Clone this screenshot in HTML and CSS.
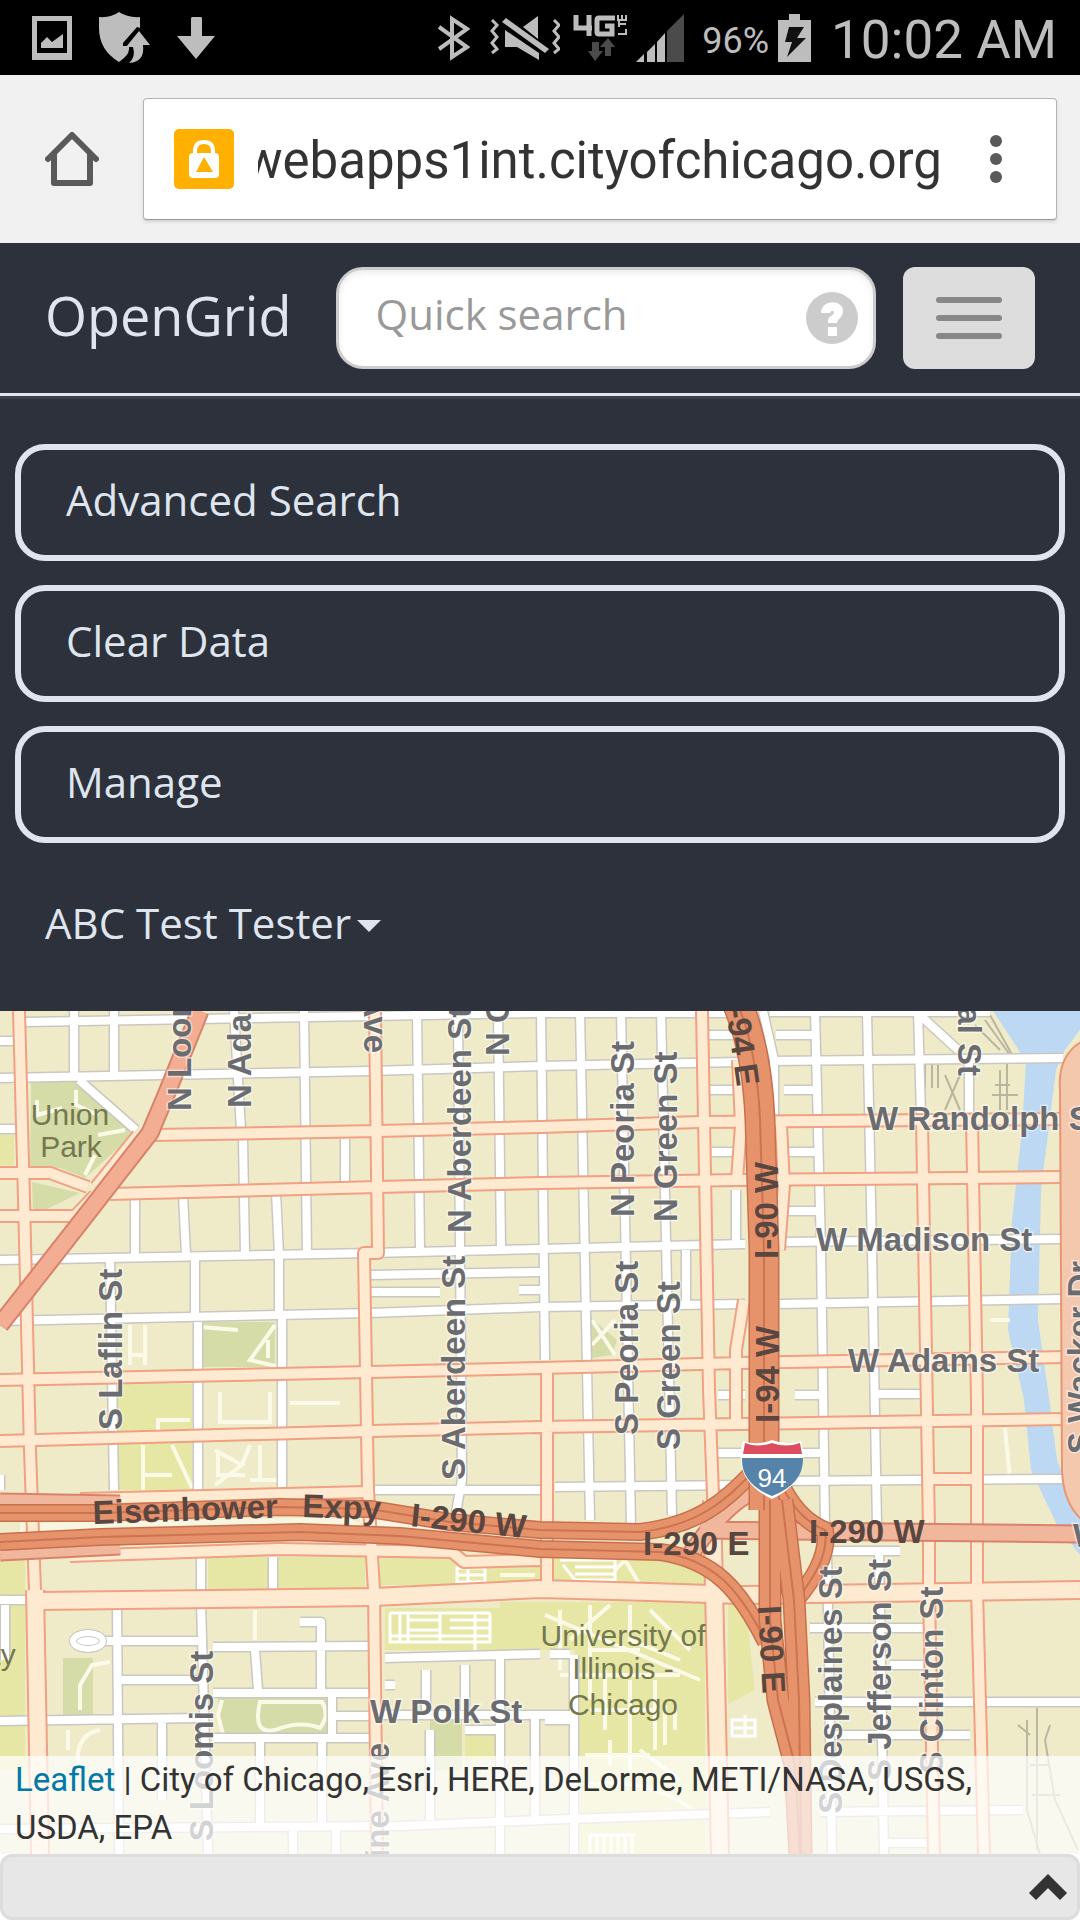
FILE: index.html
```html
<!DOCTYPE html>
<html lang="en">
<head>
<meta charset="utf-8">
<meta name="viewport" content="width=device-width, initial-scale=1">
<title>OpenGrid</title>
<link rel="stylesheet" href="styles.css">
</head>
<body>
<div class="status-bar">
  <svg class="status-icon" width="40" height="44" viewBox="0 0 40 44"><path fill-rule="evenodd" d="M0 0H40V44H0ZM5 5V37H35V5Z"/><path d="M9 32V27L15 21L20 26L31 18V32Z"/></svg>
  <svg class="status-icon shield" width="51" height="52" viewBox="0 0 51 52"><path d="M0 5Q12 6 20 0Q29 6 41 5V16L38 15L24 31V34H30Q31 41 25 46L20 50Q0 38 0 16Z"/><path d="M40 19L51 33H44Q46 50 30 51Q37 45 34 35H27Z"/></svg>
  <svg class="status-icon arrow" width="38" height="42" viewBox="0 0 38 42"><path d="M15 0H24Q25 0 25 2V19H38L19 42L0 19H14V2Q14 0 15 0Z"/></svg>
  <div class="status-right">
    <svg class="status-icon" width="32" height="48" viewBox="0 0 32 48"><path fill="none" stroke="currentColor" stroke-width="4" d="M1 13L29 33L14 43V5L29 15L1 35"/></svg>
    <svg class="status-icon mute" width="70" height="46" viewBox="0 0 70 46"><path d="M15 15V32H27L49 45V38ZM33 12L48 1V24ZM12 7L16 3L59 34L55 38Z"/><path fill="none" stroke="currentColor" stroke-width="3" d="M2 5L7 10L2 16L7 22L2 28L7 34L2 38M64 5L69 10L64 16L69 22L64 28L69 34L64 38"/></svg>
    <svg class="status-icon" width="54" height="48" viewBox="0 0 54 48"><path fill="none" stroke="currentColor" stroke-width="5" d="M3 1V14H19M16 1V22M42 4H26Q24 4 24 6V18Q24 20 26 20H39V12H32"/><path fill="none" stroke="currentColor" stroke-width="2" d="M45 20H53V15M45 10H53M46 7V13M45 1V6H53V1M49 1V6"/><path fill="#4b4b4b" d="M19 28H26V37H30L22 47L15 37H19ZM32 42H38V33H42L35 24L27 33H32Z"/></svg>
    <svg class="status-icon signal" width="48" height="48" viewBox="0 0 48 48"><path d="M0 48L8 40V48ZM11 38L19 30V48H11ZM21 28L29 19V48H21Z"/><path fill="#4b4b4b" d="M31 17L48 0V48H31Z"/></svg>
    <span class="battery-text">96%</span>
    <svg class="status-icon battery" width="33" height="48" viewBox="0 0 33 48"><path d="M11 0H22V6H33V48H0V6H11Z"/><path fill="#111" d="M11 13H26L19 24H28L9 43L14 28H7Z"/></svg>
    <span class="clock">10:02 AM</span>
  </div>
</div>

<div class="browser-bar">
  <button class="plain home" aria-label="Home"><svg width="54" height="54" viewBox="0 0 54 54" fill="none" stroke="#5a5a5a" stroke-width="6" stroke-linecap="round" stroke-linejoin="round"><path d="M3 27L27 3L51 27M9 22V51H45V22"/></svg></button>
  <div class="omnibox">
    <svg class="lock" width="60" height="60" viewBox="0 0 60 60"><rect width="60" height="60" rx="5" fill="#ffb000"/><path fill="none" stroke="#fff" stroke-width="4" d="M21 26V22Q21 13 30 13T39 22V26"/><rect x="15" y="24" width="30" height="25" rx="4" fill="#fff"/><path fill="#ffb000" d="M30 28L39 43H22Z"/></svg>
    <div class="url-clip"><input class="url" type="text" aria-label="Address" value="webapps1int.cityofchicago.org"></div>
    <button class="plain" aria-label="Browser menu"><svg width="12" height="48" viewBox="0 0 12 48" fill="#5a5a5a"><circle cx="6" cy="6" r="6"/><circle cx="6" cy="24" r="6"/><circle cx="6" cy="42" r="6"/></svg></button>
  </div>
</div>

<header class="navbar">
  <div class="nav-head">
    <a class="brand" href="#">OpenGrid</a>
    <div class="search">
      <input type="text" placeholder="Quick search" aria-label="Quick search">
      <button class="plain" aria-label="Help"><svg width="52" height="52" viewBox="0 0 52 52"><circle cx="26" cy="26" r="26" fill="#ccc"/><path fill="#fff" d="M15 21C15 7 37 7 37 19C37 26 31 27 31 31H22C21 24 27 24 28 21C28 18 25 18 24 21ZM22 35H31V44H22Z"/></svg></button>
    </div>
    <button class="toggle" aria-label="Toggle navigation"><span class="bar"></span><span class="bar"></span><span class="bar"></span></button>
  </div>
  <nav class="nav-menu">
    <button class="menu-button">Advanced Search</button>
    <button class="menu-button">Clear Data</button>
    <button class="menu-button">Manage</button>
    <a class="user" href="#">ABC Test Tester<span class="caret"></span></a>
  </nav>
</header>

<main class="map">
<svg class="map-canvas" viewBox="0 1011 1080 843" preserveAspectRatio="xMidYMid slice" role="img" aria-label="Street map of the Near West Side, Chicago">
  <defs>
    <g id="streets">
      <path d="M26 1022L370 1016L540 1013L730 1013M770 1012H990M0 1078L370 1071L540 1066L740 1062M770 1061L1063 1058M0 1041H14M0 1129H16M79 1080L136 1130M0 1260L370 1253L540 1249L745 1244M781 1242L1063 1239M0 1321L370 1313L540 1307L745 1304M780 1304L1063 1299M371 1275L540 1272M371 1292H440M519 1290H540M375 1490H540M555 1487L745 1485M780 1481L1063 1479"/>
      <path d="M74 1011V1078M114 1011V1078M234 1011L241 1130M243 1139L245 1255M304 1011L307 1255M345 1139V1184M417 1011L420 1250M458 1011L462 1480L456 1512M498 1011L501 1248M541 1011L545 1360M135 1196V1255M183 1195L186 1255M276 1192L279 1255M195 1258V1315M279 1255V1315M110 1257L114 1490M198 1322V1490M282 1313V1488M201 1557V1594M273 1557V1594M0 1475V1490"/>
      <path d="M580 1011L590 1520M621 1011L631 1525M661 1011L672 1515M686 1250V1305M736 1190V1245M763 1011L774 1060V1115M815 1011L821 1250L825 1525M867 1011L872 1250L877 1525M918 1011L921 1115M969 1060V1112M922 1017L958 1050M709 1035H735M776 1035H815M709 1090H735M784 1090H815M712 1152H740M787 1152H818M787 1211H818M718 1395H745M795 1395H824M877 1394H920M718 1453H745M785 1453H824"/>
      <path d="M827 1552L832 1854M879 1552L884 1854M832 1551H900M810 1628H925M890 1665H925M815 1702H1080M835 1735H970M540 1820L770 1812M820 1812L1023 1810M885 1843H930M201 1602L208 1854M117 1610L119 1854M0 1600H25M5 1605V1660M74 1641H200M119 1680H200M213 1647L372 1646M255 1650L258 1690M300 1622H321V1690M213 1693H372M332 1693V1735M0 1721L200 1718M162 1720V1800M213 1738H372M335 1716H372M260 1740V1825M322 1738V1825M385 1658L540 1654M385 1685H395M426 1670V1710M465 1665V1710M500 1658V1854M380 1715H570M465 1730H500M0 1829L400 1826L540 1820M430 1730V1820M535 1715V1820M574 1655V1854M550 1654H570M545 1720H574M293 1830V1854M336 1830V1854"/>
    </g>
    <g id="avenues">
      <path d="M19 1011L24 1200L30 1450L35 1590L39 1854M375 1011L378 1253H364L368 1490L374 1590L377 1854M155 1135L378 1131L540 1127L700 1122L1063 1119M110 1194L378 1187L540 1183L740 1180L1063 1177M0 1173H50L88 1187M0 1216H75L95 1195M138 1135L96 1187"/>
      <path d="M0 1380L370 1372L540 1368L740 1363L1065 1357M0 1441L370 1431L540 1427L740 1424L1065 1419M702 1011L709 1390L717 1600L719 1854M547 1365V1594M738 1060L741 1125L737 1180M781 1125L784 1185L779 1250M744 1300L736 1350V1424M922 1120L929 1530V1592L934 1854M972 1120L977 1400V1590L984 1854M926 1479H972M80 1499L366 1492M70 1556L280 1549L452 1552L464 1562L540 1560"/>
    </g>
    <path id="boulevard" d="M39 1601L374 1597L540 1589L650 1592L740 1595L1080 1590"/>
    <path id="ashland" d="M35 1590L40 1854M712 1500L720 1854"/>
    <path id="ogden" d="M200 1011L166 1095L150 1133L90 1210L0 1325"/>
    <path id="wacker" d="M1095 1050Q1070 1058 1073 1090L1075 1470Q1076 1500 1095 1514"/>
    <path id="congress" d="M0 1502L120 1504M0 1552L120 1546M700 1530L1080 1534M690 1555Q735 1490 765 1490"/>
    <g id="interstates">
      <path d="M0 1513L100 1513L280 1507L370 1509L450 1522L540 1530L640 1532C700 1525 725 1500 750 1475"/>
      <path d="M0 1542L100 1537L300 1532L400 1536L540 1549L660 1552C715 1560 740 1590 766 1642M784 1490Q800 1520 825 1530Q830 1560 796 1600"/>
    </g>
    <path id="ryan" d="M770 1500V1620L778 1700L795 1765L800 1854M782 1500L794 1600L799 1700L801 1854"/>
    <path id="kennedy" d="M738 1005Q757 1050 760 1120L764 1250V1510"/>
  </defs>

  <rect y="1000" width="1080" height="860" fill="#efebc9"/>
  <path fill="#d5dca8" d="M31 1082L75 1080L135 1133L85 1178L60 1168H30ZM32 1182L80 1193L45 1210H33ZM200 1322H275V1367H200ZM590 1317L617 1340L612 1355L592 1358ZM63 1658H93V1716H63ZM218 1698H328V1738H222ZM430 1715H462V1770H430Z"/>
  <path fill="#e6e7a4" d="M0 1135H14V1165H0ZM118 1384H192V1490H118ZM208 1557H365V1590H208ZM380 1557H700L735 1585H380ZM0 1560H25V1770H0ZM385 1608H540V1650H385ZM500 1602H705V1710H575V1650H500ZM580 1700H705V1854H580ZM728 1602H745L755 1690L728 1704ZM465 1732H495V1760H465Z"/>
  <path fill="#f8f5e1" d="M300 1500L380 1530L540 1538V1530L450 1518ZM20 1523L360 1517V1525L20 1532Z"/>
  <path fill="#bcd8f2" d="M993 1011L1020 1052L1026 1062L1022 1130L1012 1220L1008 1330L1024 1400L1031 1470L1057 1525L1080 1555V1520L1057 1460L1048 1390L1038 1320L1041 1190L1056 1070L1065 1050L1080 1030V1011Z"/>
  <g class="paths">
    <path d="M37 1100V1115L62 1108M76 1090V1105L98 1115M98 1135L125 1130M95 1155L85 1175M130 1325V1365M145 1325V1365M130 1355H145M200 1327L238 1330M275 1325L250 1360L280 1367M268 1340V1358M158 1430V1420H190M143 1445V1490M143 1475H172M172 1445L192 1488M220 1392V1422H270V1392M215 1450L242 1465L215 1485M218 1450V1475H245M242 1465L250 1445M260 1445V1482M250 1480H278M290 1403H340"/>
    <path d="M592 1320L615 1355M615 1320L592 1345M255 1610V1640M80 1710V1685L92 1665L110 1662M260 1702Q252 1735 275 1730Q300 1720 320 1728Q330 1715 322 1702ZM68 1730V1750M100 1730Q75 1735 78 1765L95 1790M222 1700L218 1715L224 1738M500 1575H535M615 1570L625 1560L640 1585M545 1615L700 1680M560 1610V1670M590 1605V1700M610 1605L570 1640M630 1605V1640L680 1660M650 1610L690 1650M590 1650H640M560 1675H680M605 1670V1730M630 1680V1770M655 1680V1750M590 1710H660M585 1755H650M610 1740V1765M640 1750L680 1780M585 1785Q650 1775 700 1815M665 1705V1745M675 1705V1730M1005 1428L1010 1480M990 1320H1010"/>
  </g>
  <g class="lots">
    <path d="M390 1613V1642H490V1613M390 1613H490M400 1613V1642M408 1613V1642M408 1620H440V1630H408M440 1613V1642M450 1620H490M450 1628H490M390 1636H490M475 1613V1655M457 1568H485V1582H457ZM457 1575H485M468 1568V1582M560 1560H615V1580H575L563 1565M575 1567H615M575 1574H615M732 1720H755V1736H732ZM745 1715V1736M732 1728H755M590 1835V1853M597 1835V1853M604 1835V1853M611 1835V1853M618 1835V1853M625 1835V1853M632 1835V1853M590 1835H635"/>
    <path class="rail" d="M925 1060V1088M932 1060V1088M938 1065V1088M945 1075L960 1110M960 1075L945 1110M995 1085H1010M1000 1070V1110M1007 1060V1110M992 1095H1018M985 1020L1010 1055M975 1025L1000 1050M990 1015L1015 1060M1037 1708V1850M1027 1720V1810L1040 1854M1045 1740L1055 1800L1078 1850M1030 1765H1050M1032 1795H1060M1018 1725L1030 1735M1050 1725L1045 1740"/>
  </g>

  <use href="#streets" class="street-edge"/><use href="#streets" class="street"/>
  <ellipse cx="88" cy="1641" rx="15" ry="8" fill="none" stroke="#c9c7c2" stroke-width="8"/><ellipse cx="88" cy="1641" rx="15" ry="8" fill="none" stroke="#fff" stroke-width="6"/>
  <use href="#avenues" class="avenue-edge"/><use href="#boulevard" class="wide-edge"/><use href="#ashland" class="wide-edge"/>
  <use href="#avenues" class="avenue"/><use href="#boulevard" class="wide"/><use href="#ashland" class="wide"/>
  <use href="#ogden" class="ogden-edge"/><use href="#ogden" class="ogden"/>
  <use href="#wacker" class="wacker-edge"/><use href="#wacker" class="wacker"/>
  <use href="#congress" class="ogden-edge"/><use href="#congress" class="congress"/>
  <use href="#interstates" class="interstate-edge"/><use href="#interstates" class="interstate"/><use href="#interstates" class="lane"/>
  <use href="#kennedy" class="kennedy-edge"/><use href="#ryan" class="ryan-edge"/>
  <use href="#kennedy" class="kennedy"/><use href="#ryan" class="ryan"/>
  <use href="#kennedy" class="lane"/><use href="#ryan" class="lane"/>

  <g class="street-label">
    <text transform="translate(191 1111) rotate(-90)">N Loomis St</text>
    <text transform="translate(251 1108) rotate(-90)">N Ada St</text>
    <text transform="translate(364 1053) rotate(90)" text-anchor="end">N Racine Ave</text>
    <text transform="translate(471 1233) rotate(-90)">N Aberdeen St</text>
    <text transform="translate(465 1480) rotate(-90)">S Aberdeen St</text>
    <text transform="translate(509 1056) rotate(-90)">N Carpenter St</text>
    <text transform="translate(122 1430) rotate(-90)">S Laflin St</text>
    <text transform="translate(634 1217) rotate(-90)">N Peoria St</text>
    <text transform="translate(677 1222) rotate(-90)">N Green St</text>
    <text transform="translate(638 1435) rotate(-90)">S Peoria St</text>
    <text transform="translate(680 1450) rotate(-90)">S Green St</text>
    <text transform="translate(958 1076) rotate(90)" text-anchor="end">N Canal St</text>
    <text transform="translate(1091 1454) rotate(-90)">S Wacker Dr</text>
    <text transform="translate(842 1690) rotate(-90)" text-anchor="middle">S Desplaines St</text>
    <text transform="translate(891 1670) rotate(-90)" text-anchor="middle">S Jefferson St</text>
    <text transform="translate(943 1680) rotate(-90)" text-anchor="middle">S Clinton St</text>
    <text transform="translate(213 1746) rotate(-90)" text-anchor="middle">S Loomis St</text>
    <text transform="translate(389 1743) rotate(-90)" text-anchor="end">S Racine Ave</text>
    <text x="867" y="1130">W Randolph St</text>
    <text x="816" y="1251">W Madison St</text>
    <text x="848" y="1372">W Adams St</text>
    <text x="370" y="1723">W Polk St</text>
    <text x="1073" y="1547">W Congress Pkwy</text>
  </g>
  <g class="highway-label">
    <text transform="translate(93 1524) rotate(-2)">Eisenhower</text>
    <text transform="translate(302 1517) rotate(2)">Expy</text>
    <text transform="translate(410 1526) rotate(6)">I-290 W</text>
    <text x="643" y="1555">I-290 E</text>
    <text x="809" y="1543">I-290 W</text>
    <text transform="translate(778 1259) rotate(-90)">I-90 W</text>
    <text transform="translate(779 1423) rotate(-90)">I-94 W</text>
    <text transform="translate(737 1087) rotate(82)" text-anchor="end">I-94 E</text>
    <text transform="translate(758 1606) rotate(87)">I-90 E</text>
  </g>
  <g class="place-label">
    <text x="70" y="1125">Union</text><text x="71" y="1157">Park</text>
    <text x="623" y="1646">University of</text><text x="623" y="1679">Illinois -</text><text x="623" y="1715">Chicago</text>
    <text x="4" y="1665">ty</text>
  </g>
  <path fill="#fff" d="M743 1441Q758 1446 772 1440Q787 1446 801 1441Q812 1480 772 1499Q732 1480 743 1441Z"/>
  <path fill="#dd4b5f" d="M745 1443Q758 1448 772 1443Q786 1448 800 1443L802 1454H743Z"/>
  <path fill="#5583a9" d="M742 1458H803Q804 1484 772 1496Q741 1484 742 1458Z"/>
  <text class="shield-number" x="772" y="1487">94</text>
</svg>
<div class="attribution"><a href="#">Leaflet</a> | City of Chicago, Esri, HERE, DeLorme, METI/NASA, USGS, USDA, EPA</div>
</main>
<footer class="drawer"><button class="plain" aria-label="Expand results"><svg width="38" height="26" viewBox="0 0 38 26"><path fill="#333" d="M19 0L38 19L31 26L19 14L7 26L0 19Z"/></svg></button></footer>
</body>
</html>
```
FILE: styles.css
```css
* { box-sizing: border-box; }

body {
  margin: 0;
  min-height: 100vh;
  display: flex;
  flex-direction: column;
  background: #fff;
  color: #333;
  font-family: "Open Sans", sans-serif;
  font-size: 42px;
}

svg { display: block; flex: none; }
a { text-decoration: none; }
button, input { font: inherit; color: inherit; }
.plain { display: block; padding: 0; border: 0; background: none; }

/* Phone status bar */
.status-bar {
  display: flex;
  align-items: center;
  height: 75px;
  padding: 0 23px 0 32px;
  background: #000;
  color: #bdbdbd;
  font-family: Roboto, sans-serif;
  line-height: 1;
}
.status-icon { fill: currentColor; }
.shield { margin-left: 27px; }
.arrow { margin-left: 27px; }
.status-right { display: flex; align-items: center; margin-left: auto; }
.mute { margin: 0 13px 0 20px; }
.signal { margin: 0 18px 0 9px; }
.battery-text { font-size: 36px; padding-top: 6px; }
.battery { margin: 0 20px 0 9px; }
.clock { font-size: 53px; padding-top: 6px; }

/* Browser toolbar */
.browser-bar {
  display: flex;
  align-items: center;
  height: 168px;
  padding: 0 23px 0 45px;
  gap: 44px;
  background: #f1f1f1;
}
.omnibox {
  flex: 1;
  min-width: 0;
  display: flex;
  align-items: center;
  height: 122px;
  padding: 0 54px 0 30px;
  background: #fff;
  border: 1px solid #b4b4b4;
  border-bottom-color: #999;
  border-radius: 4px;
  box-shadow: 0 2px 3px rgba(0, 0, 0, .12);
}
.url-clip {
  flex: 1;
  min-width: 0;
  display: flex;
  justify-content: flex-end;
  margin: 0 48px 0 24px;
  overflow: hidden;
}
.url {
  flex: none;
  width: 800px;
  padding: 4px 0 0;
  border: 0;
  background: none;
  font-family: Roboto, sans-serif;
  font-size: 51px;
  line-height: 64px;
  text-align: right;
}

/* Application header */
.navbar { background: #2c313b; color: #dfe5ee; }
.nav-head {
  display: flex;
  align-items: center;
  height: 153px;
  padding: 0 45px;
  border-bottom: 3px solid #e0e5ec;
}
.brand { padding-bottom: 6px; color: inherit; font-size: 54px; line-height: 72px; }
.search {
  flex: 1;
  min-width: 0;
  display: flex;
  align-items: center;
  height: 102px;
  margin: 0 27px 0 45px;
  padding: 0 15px 0 36px;
  background: #fff;
  border: 3px solid #ccc;
  border-radius: 27px;
  box-shadow: inset 0 3px 6px rgba(0, 0, 0, .08);
}
.search input {
  flex: 1;
  min-width: 0;
  height: 90px;
  padding: 0 0 10px;
  border: 0;
  background: none;
  color: #333;
}
.search input::placeholder { color: #999; opacity: 1; }
.toggle {
  display: flex;
  flex-direction: column;
  align-items: center;
  justify-content: center;
  gap: 12px;
  width: 132px;
  height: 102px;
  padding: 0;
  border: 0;
  border-radius: 12px;
  background: #ddd;
}
.bar { width: 66px; height: 6px; border-radius: 3px; background: #888; }
.nav-menu {
  display: flex;
  flex-direction: column;
  gap: 24px;
  padding: 45px 15px 27px;
  border-top: 3px solid #3b424c;
}
.menu-button {
  height: 117px;
  padding: 0 45px 6px;
  border: 6px solid #dfe5ee;
  border-radius: 30px;
  background: none;
  text-align: left;
}
.user {
  display: flex;
  align-items: center;
  height: 117px;
  padding: 0 30px 6px;
  color: inherit;
}
.caret {
  margin: 6px 0 0 6px;
  border: 12px solid transparent;
  border-top-color: currentColor;
  border-bottom: 0;
}

/* Map */
.map { position: relative; flex: 1; min-height: 480px; overflow: hidden; }
.map-canvas { position: absolute; inset: 0; width: 100%; height: 100%; }
.map-canvas use { fill: none; stroke-linejoin: round; }
.street-edge { stroke: #c9c7c2; stroke-width: 11px; }
.street { stroke: #fff; stroke-width: 8px; }
.avenue-edge { stroke: #f0a083; stroke-width: 14px; }
.avenue { stroke: #fdead0; stroke-width: 10px; }
.wide-edge { stroke: #f0a083; stroke-width: 20px; }
.wide { stroke: #fdead0; stroke-width: 16px; }
.ogden-edge { stroke: #d9826a; stroke-width: 19px; }
.ogden { stroke: #f2ad92; stroke-width: 15px; }
.congress { stroke: #f1b79d; stroke-width: 15px; }
.wacker-edge { stroke: #e89576; stroke-width: 28px; }
.wacker { stroke: #f3c8ad; stroke-width: 24px; }
.kennedy-edge { stroke: #c8704e; stroke-width: 31px; }
.kennedy { stroke: #e6936c; stroke-width: 28px; }
.ryan-edge { stroke: #c8704e; stroke-width: 23px; }
.ryan { stroke: #e6936c; stroke-width: 20px; }
.interstate-edge { stroke: #c8704e; stroke-width: 18px; }
.interstate { stroke: #e6936c; stroke-width: 15px; }
.lane { stroke: #cc7351; stroke-width: 2px; }
.paths { fill: none; stroke: #fbfae9; stroke-width: 4px; }
.lots { fill: none; stroke: #fff; stroke-width: 3px; }
.rail { stroke: #b8b5a0; stroke-width: 2px; }
.street-label, .highway-label {
  font: bold 33px "Liberation Sans", sans-serif;
  fill: #6a6c70;
  stroke: rgba(255, 255, 255, .5);
  stroke-width: 3px;
  paint-order: stroke;
}
.highway-label { fill: #5a4640; stroke: none; }
.place-label {
  font: 30px "Liberation Sans", sans-serif;
  fill: #74784e;
  text-anchor: middle;
}
.shield-number {
  font: 26px "Liberation Sans", sans-serif;
  fill: #fff;
  text-anchor: middle;
}
.attribution {
  position: absolute;
  left: 0;
  right: 0;
  bottom: 0;
  padding: 0 15px 2px;
  background: rgba(255, 255, 255, .7);
  font-family: Roboto, sans-serif;
  font-size: 33px;
  line-height: 48px;
}
.attribution a { color: #0078a8; }

/* Collapsed results drawer */
.drawer {
  display: flex;
  align-items: center;
  justify-content: flex-end;
  height: 66px;
  padding: 0 10px;
  border: 3px solid #ddd;
  border-radius: 12px;
  background: #e7e7e7;
}
```
